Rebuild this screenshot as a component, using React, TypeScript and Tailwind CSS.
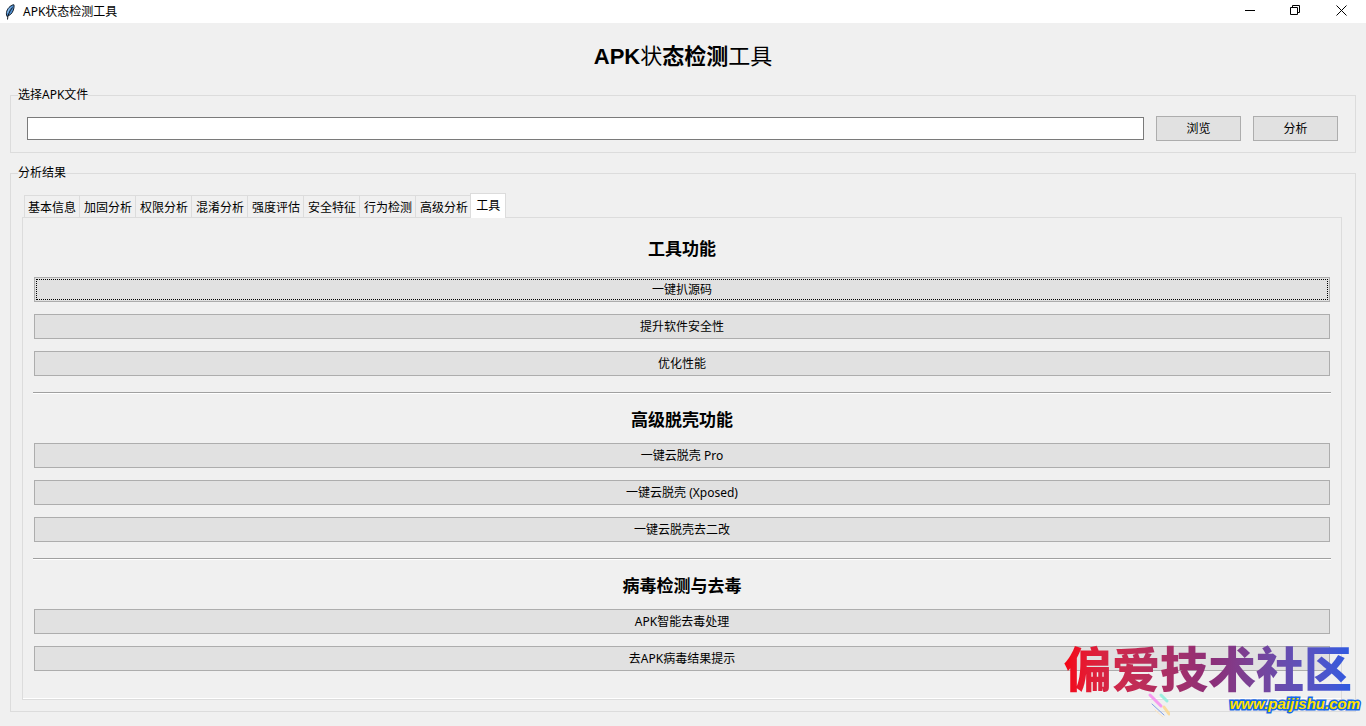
import { useState } from "react"
import type { ReactNode } from "react"

const tabs = ["基本信息", "加固分析", "权限分析", "混淆分析", "强度评估", "安全特征", "行为检测", "高级分析", "工具"]

const sections = [
    { title: "工具功能", actions: ["一键扒源码", "提升软件安全性", "优化性能"] },
    { title: "高级脱壳功能", actions: ["一键云脱壳 Pro", "一键云脱壳 (Xposed)", "一键云脱壳去二改"] },
    { title: "病毒检测与去毒", actions: ["APK智能去毒处理", "去APK病毒结果提示"] },
]

function Feather() {
    return (
        <svg width="16" height="16" viewBox="0 0 16 16" aria-hidden="true">
            <path d="M5 12.500C3.500 9 5 5 8 2.500C9.500 1.200 11 .700 12 .800C12.500 4 11 8.500 8.500 10.500C7.500 11.500 6 11.500 5 12.500Z" fill="#4f8fd0" stroke="#16202c" strokeWidth="1" />
            <path d="M8.500 3.500C7 5 6 7 5.800 9" stroke="#9cc6ee" strokeWidth="1" fill="none" />
            <path d="M5.500 15.500C5.500 11.500 7.500 7 10.500 3.500" stroke="#10161f" strokeWidth="1" fill="none" />
        </svg>
    )
}

function WindowButton({ label, children }: { label: string; children: ReactNode }) {
    return (
        <button type="button" aria-label={label} className="flex h-full w-[46px] items-center justify-center pb-0.5">
            <svg width="11" height="11" viewBox="0 0 11 11" fill="none" stroke="#000" aria-hidden="true">
                {children}
            </svg>
        </button>
    )
}

function TitleBar() {
    return (
        <header className="flex h-[23px] items-center justify-between bg-white pr-0.5">
            <div className="flex items-center gap-[5px] pl-0.5">
                <Feather />
                <span className="leading-4">APK状态检测工具</span>
            </div>
            <div className="flex h-full">
                <WindowButton label="最小化">
                    <path d="M1 5.500H11" />
                </WindowButton>
                <WindowButton label="还原">
                    <path d="M.5 2.500H7.500V9.500H.5ZM2.500 2.500V.5H9.500V7.500H7.500" />
                </WindowButton>
                <WindowButton label="关闭">
                    <path d="M.5.5L10.500 10.500M10.500.5L.5 10.500" />
                </WindowButton>
            </div>
        </header>
    )
}

function Button({ children, className = "" }: { children: ReactNode; className?: string }) {
    return (
        <button type="button" className={`h-[25px] border border-[#adadad] bg-[#e1e1e1] leading-4 ${className}`}>
            {children}
        </button>
    )
}

function Watermark() {
    return (
        <div className="pointer-events-none absolute right-1.5 bottom-3.5 flex flex-col items-end">
            <span className="bg-linear-to-r from-[#f5000f] via-[#8c2e78] to-[#1b5be8] bg-clip-text pr-2 pb-[3px] text-[48px] leading-[48px] font-black text-transparent">
                偏爱技术社区
            </span>
            <div className="flex w-full justify-between pl-20">
                <svg width="26" height="26" viewBox="0 0 26 26" className="-mt-1 -mb-1.5" strokeLinecap="round" aria-hidden="true">
                    <path d="M6 3L17 14" stroke="#f78bf0" strokeWidth="3" strokeOpacity=".85" />
                    <path d="M17 3L23 9" stroke="#8df0dc" strokeWidth="3" strokeOpacity=".85" />
                    <path d="M8 12L20 23" stroke="#7d9fe8" strokeWidth="1" />
                    <path d="M11 18L19 25" stroke="#fbe3bf" strokeWidth="1" />
                    <path d="M20 15L25 22" stroke="#fbd78e" strokeWidth="3" strokeOpacity=".85" />
                </svg>
                <span className="text-[15px] leading-4 font-bold text-[#ffe100] italic [-webkit-text-stroke:3px_#1668e8] [font-family:'Liberation_Sans',sans-serif] [paint-order:stroke_fill]">
                    www.paijishu.com
                </span>
            </div>
        </div>
    )
}

export default function App() {
    const [active, setActive] = useState("工具")
    const [file, setFile] = useState("")

    return (
        <div className="relative flex min-h-screen flex-col bg-[#f0f0f0] pb-3.5 text-[12px] text-black [font-family:'Noto_Sans','Noto_Sans_CJK_SC',sans-serif]">
            <TitleBar />
            <h1 className="mt-[18px] mb-3.5 text-center text-[22px] leading-8 font-bold [font-family:'Liberation_Sans','Noto_Sans_CJK_SC',sans-serif]">
                APK<span className="font-normal">状</span>态检测<span className="font-normal">工具</span>
            </h1>

            <fieldset className="mx-2.5 min-w-0 border border-[#dcdcdc] pt-[13px] pr-[17px] pb-[11px] pl-4">
                <legend className="-ml-[9px] leading-4">
                    <label htmlFor="apk">选择APK文件</label>
                </legend>
                <div className="flex items-center gap-3">
                    <input
                        id="apk"
                        type="text"
                        value={file}
                        onChange={(e) => setFile(e.target.value)}
                        className="h-[23px] min-w-0 flex-1 border border-[#7a7a7a] bg-white px-1"
                    />
                    <Button className="w-[85px]">浏览</Button>
                    <Button className="w-[85px]">分析</Button>
                </div>
            </fieldset>

            <fieldset className="mx-2.5 mt-3 flex min-w-0 flex-1 flex-col border border-[#dcdcdc] pt-3 pr-[13px] pb-[11px] pl-[11px]">
                <legend className="-ml-1 leading-4">分析结果</legend>
                <div role="tablist" className="ml-0.5 flex h-6 items-end">
                    {tabs.map((tab) => (
                        <button
                            key={tab}
                            type="button"
                            role="tab"
                            aria-selected={tab === active}
                            onClick={() => setActive(tab)}
                            className={
                                tab === active
                                    ? "relative -mb-px -ml-px h-[25px] border border-b-0 border-[#dcdcdc] bg-white px-[5px] leading-4"
                                    : "h-[22px] border-t border-l border-[#dcdcdc] pt-0.5 pr-[3px] pl-1 leading-4 first:pl-[3px]"
                            }
                        >
                            {tab}
                        </button>
                    ))}
                </div>
                <div role="tabpanel" className="flex-1 border border-[#dcdcdc] px-2.5 pt-1 pb-7 shadow-[inset_0_-1px_0_#fff]">
                    {sections.map((section, i) => (
                        <section key={section.title} className={i > 0 ? "mt-4 border-t border-[#a0a0a0] shadow-[inset_0_1px_0_#fff]" : ""}>
                            <h2
                                className={`pt-3.5 text-center text-[17px] leading-6 font-bold [font-family:'Noto_Sans_CJK_SC',sans-serif] ${i > 0 ? "pb-3" : "pb-[17px]"}`}
                            >
                                {section.title}
                            </h2>
                            <div className="flex flex-col gap-3 px-px">
                                {section.actions.map((action) => (
                                    <Button
                                        key={action}
                                        className={action === "一键扒源码" ? "outline-1 -outline-offset-3 outline-black outline-dotted" : ""}
                                    >
                                        {action}
                                    </Button>
                                ))}
                            </div>
                        </section>
                    ))}
                </div>
            </fieldset>
            <Watermark />
        </div>
    )
}
